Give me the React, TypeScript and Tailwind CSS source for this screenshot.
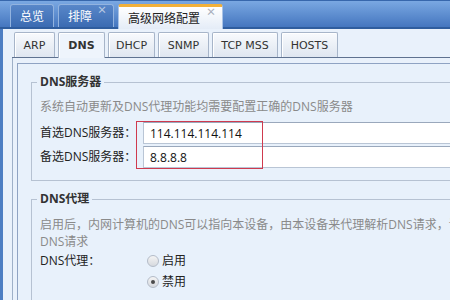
const mainTabs = [
  { label: '总览', close: false, active: false },
  { label: '排障', close: true, active: false },
  { label: '高级网络配置', close: true, active: true },
];

const subTabs = [
  { label: 'ARP', w: 'w-[41px]' },
  { label: 'DNS', w: 'w-[47px]', active: true },
  { label: 'DHCP', w: 'w-[47px]' },
  { label: 'SNMP', w: 'w-[51px]' },
  { label: 'TCP MSS', w: 'w-[66px]' },
  { label: 'HOSTS', w: 'w-[57px]' },
];

function Radio({ checked }: { checked?: boolean }) {
  return (
    <span className="w-[12px] h-[12px] rounded-full border border-[#b4bcc8] bg-linear-to-b from-[#f4f4f4] to-[#d6d9de] flex items-center justify-center shrink-0">
      {checked && <span className="w-[4px] h-[4px] rounded-full bg-[#4a4a4a]" />}
    </span>
  );
}

export default function App() {
  return (
    <div className="w-[450px] h-[300px] overflow-hidden flex flex-col bg-[#e9f1fb] font-['Open_Sans','Noto_Sans_CJK_SC',sans-serif] text-[12px] text-[#222]">
      {/* top tab bar */}
      <div className="h-[29px] shrink-0 flex items-end gap-[4px] pl-[10px] border-t border-[#3767ac] border-b-2 border-b-[#2f5d9e] bg-linear-to-b from-[#7aa8e2] to-[#4576bf]">
        {mainTabs.map((t) =>
          t.active ? (
            <div
              key={t.label}
              className="relative z-10 -mb-[2px] h-[25px] pl-[9px] pr-[22px] flex items-center rounded-t-[3px] border border-b-0 border-[#a9c3e6] border-t-[3px] border-t-[#f2b13a] bg-linear-to-b from-white to-[#e4ecf7] font-['Noto_Sans_CJK_SC',sans-serif] text-[12px] text-[#222] leading-none"
            >
              {t.label}
              <span className="absolute right-[6px] top-[0px] text-[10px] font-bold text-[#a8b0bc]">×</span>
            </div>
          ) : (
            <div
              key={t.label}
              className={`relative h-[23px] pl-[9px] ${t.close ? 'pr-[21px]' : 'pr-[9px]'} flex items-center rounded-t-[3px] border border-b-0 border-[#92b3df] bg-linear-to-b from-[#5887c9] to-[#3b6bb2] font-['Noto_Sans_CJK_SC',sans-serif] text-[12px] text-white leading-none`}
            >
              {t.label}
              {t.close && <span className="absolute right-[6px] top-[0px] text-[10px] font-bold text-[#b8c8e2]">×</span>}
            </div>
          )
        )}
      </div>

      {/* body */}
      <div className="flex-1 flex border-l-[3px] border-[#4d7ec3]">
        <div className="ml-[9px] w-[640px] shrink-0 flex flex-col">
          {/* sub tabs */}
          <div className="h-[29px] shrink-0 flex items-end gap-[3px] pl-[2px] border-b border-[#5f7290]">
            {subTabs.map((t) => (
              <div
                key={t.label}
                className={`${t.w} flex items-center justify-center rounded-t-[2px] border border-b-0 border-[#a7b5c9] font-['DejaVu_Sans',sans-serif] text-[11px] leading-none text-[#333] shadow-[inset_1px_1px_0_#ffffff] ${
                  t.active
                    ? 'h-[26px] -mb-px bg-[#eef4fc] font-bold text-[#111]'
                    : 'h-[25px] bg-linear-to-b from-[#f8fafd] to-[#dfe6f0]'
                }`}
              >
                {t.label}
              </div>
            ))}
          </div>

          {/* content panel */}
          <div className="flex-1 border-l border-[#9eb0c8] pl-[4px] pt-[5px]">
            <div className="h-full border-l border-t border-[#8fa3c3] bg-[#e8f1fb] pl-[13px] pt-[9px]">
              {/* DNS服务器 */}
              <fieldset className="border border-[#b6c2d2] pl-[8px] pb-[12px] w-[560px]">
                <legend className="px-[3px] -ml-[3px] font-bold text-[#333] leading-[18px]">DNS服务器</legend>
                <div className="pt-[7px] leading-[18px] text-[#8a8a8a] whitespace-nowrap">系统自动更新及DNS代理功能均需要配置正确的DNS服务器</div>
                <div className="mt-[6px] flex">
                  <div className="w-[103px] shrink-0 flex flex-col gap-[2px] whitespace-nowrap">
                    <div className="h-[22px] flex items-center">首选DNS服务器：</div>
                    <div className="h-[22px] flex items-center">备选DNS服务器：</div>
                  </div>
                  <div className="relative flex-1 flex flex-col gap-[2px]">
                    <input
                      readOnly
                      value="114.114.114.114"
                      className="h-[22px] w-full bg-white border border-[#b9c5d5] border-t-[#9aa8bc] pl-[6px] text-[12px] text-[#111] outline-none"
                    />
                    <input
                      readOnly
                      value="8.8.8.8"
                      className="h-[22px] w-full bg-white border border-[#b9c5d5] border-t-[#9aa8bc] pl-[6px] text-[12px] text-[#111] outline-none"
                    />
                    <div className="absolute -left-[7px] -top-[1px] w-[127px] h-[48px] border border-[#cf3a4e]" />
                  </div>
                </div>
              </fieldset>

              {/* DNS代理 */}
              <fieldset className="mt-[9px] border border-[#b6c2d2] pl-[8px] pb-[10px] w-[560px]">
                <legend className="px-[3px] -ml-[3px] font-bold text-[#333] leading-[18px]">DNS代理</legend>
                <div className="pt-[8px] leading-[17px] text-[#8a8a8a] whitespace-nowrap">
                  <div>启用后，内网计算机的DNS可以指向本设备，由本设备来代理解析DNS请求，请确保设备可以正常解析</div>
                  <div>DNS请求</div>
                </div>
                <div className="flex">
                  <div className="w-[107px] shrink-0 h-[21px] flex items-center">DNS代理：</div>
                  <div className="flex flex-col">
                    <label className="h-[21px] flex items-center gap-[3px]">
                      <Radio />
                      <span>启用</span>
                    </label>
                    <label className="h-[21px] flex items-center gap-[3px]">
                      <Radio checked />
                      <span>禁用</span>
                    </label>
                  </div>
                </div>
              </fieldset>
            </div>
          </div>
        </div>
      </div>
    </div>
  );
}
